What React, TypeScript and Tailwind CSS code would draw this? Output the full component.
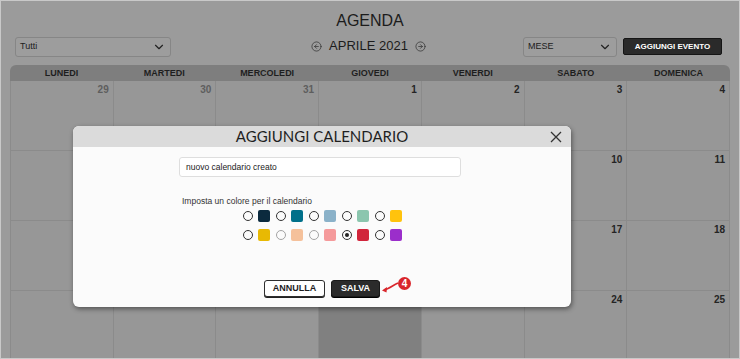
import { ChevronDown, CircleArrowLeft, CircleArrowRight } from "lucide-react"

const days = ["LUNEDI", "MARTEDI", "MERCOLEDI", "GIOVEDI", "VENERDI", "SABATO", "DOMENICA"]

type Day = { n: number; muted?: boolean; today?: boolean }

const weeks: Day[][] = [
  [{ n: 29, muted: true }, { n: 30, muted: true }, { n: 31, muted: true }, { n: 1 }, { n: 2 }, { n: 3 }, { n: 4 }],
  [{ n: 5 }, { n: 6 }, { n: 7 }, { n: 8 }, { n: 9 }, { n: 10 }, { n: 11 }],
  [{ n: 12 }, { n: 13 }, { n: 14 }, { n: 15 }, { n: 16 }, { n: 17 }, { n: 18 }],
  [{ n: 19 }, { n: 20 }, { n: 21 }, { n: 22, today: true }, { n: 23 }, { n: 24 }, { n: 25 }],
]

type Swatch = { color: string; light?: boolean; checked?: boolean }

const swatchRows: Swatch[][] = [
  [{ color: "#0b2a3e" }, { color: "#00708a" }, { color: "#8bb2c9" }, { color: "#8bc6ae" }, { color: "#ffc30d" }],
  [
    { color: "#e8b903" },
    { color: "#f5c19b", light: true },
    { color: "#f59a9b", light: true },
    { color: "#d1253b", checked: true },
    { color: "#9b2ecb" },
  ],
]

function Select({ label, width }: { label: string; width: string }) {
  return (
    <div
      className={`${width} h-[20px] flex items-center justify-between pl-[4px] pr-[4px] border border-[#868686] rounded-[3px] bg-[#9d9d9d] text-[9px] text-[#1c1c1c]`}
    >
      <span>{label}</span>
      <ChevronDown size={14} strokeWidth={2} className="text-[#222]" />
    </div>
  )
}

export default function App() {
  return (
    <div className="relative w-[740px] h-[359px] overflow-hidden border border-[#c9c9c9] bg-[#9b9b9b] font-['Liberation_Sans',Arial,sans-serif] text-[#1c1c1c]">
      <h1 className="pt-[11px] text-center text-[16px] leading-[18px]">AGENDA</h1>

      {/* toolbar */}
      <div className="mt-[7px] grid grid-cols-[1fr_auto_1fr] items-start pl-[14px] pr-[17px]">
        <div className="flex justify-start">
          <Select label="Tutti" width="w-[156px]" />
        </div>
        <div className="flex items-center gap-[7px] h-[16px] mt-[1px] text-[13px] leading-[16px]">
          <CircleArrowLeft size={11} strokeWidth={1.6} className="text-[#333]" />
          <span>APRILE 2021</span>
          <CircleArrowRight size={11} strokeWidth={1.6} className="text-[#333]" />
        </div>
        <div className="flex justify-end items-start gap-[6px]">
          <Select label="MESE" width="w-[94px]" />
          <button className="w-[99px] h-[17px] mt-[1px] rounded-[2px] border border-[#151515] bg-[#2a2a2a] text-[8px] font-bold text-white leading-none">
            AGGIUNGI EVENTO
          </button>
        </div>
      </div>

      {/* calendar */}
      <div className="mt-[8px] ml-[9px] w-[720px]">
        <div className="grid grid-cols-7 h-[16px] rounded-t-[6px] bg-[#7e7e7e] text-[9px] font-bold leading-[16px] text-center text-[#1e1e1e]">
          {days.map((d) => (
            <div key={d}>{d}</div>
          ))}
        </div>
        <div className="grid grid-cols-7 border-l border-[#8b8b8b]">
          {weeks.flat().map((d, i) => (
            <div
              key={i}
              className={`h-[70px] border-r border-b border-[#8b8b8b] pr-[4px] pt-[3px] text-right text-[10px] leading-[12px] font-bold ${
                d.today ? "bg-[#808080]" : "bg-[#979797]"
              } ${d.muted ? "text-[#5e5e5e]" : "text-[#242424]"}`}
            >
              {d.n}
            </div>
          ))}
        </div>
      </div>

      {/* modal */}
      <div className="absolute left-[72px] top-[125px] w-[498px] h-[181px] flex flex-col overflow-hidden rounded-[6px] bg-[#fbfbfb] shadow-[1px_2px_5px_rgba(0,0,0,0.45)]">
        <div className="relative h-[21px] flex items-center justify-center bg-[#dbdbdb]">
          <span className="font-['Lato',sans-serif] text-[15px] leading-none text-[#1f1f1f]">AGGIUNGI CALENDARIO</span>
          <svg className="absolute right-[9px] top-[5px]" width="12" height="12" viewBox="0 0 12 12">
            <path d="M1 1 L11 11 M11 1 L1 11" stroke="#333" strokeWidth="1.3" fill="none" />
          </svg>
        </div>

        <div className="mt-[10px] ml-[106px] w-[282px] h-[20px] flex items-center pl-[6px] border border-[#dedede] rounded-[3px] bg-white text-[8.5px] text-[#222]">
          nuovo calendario creato
        </div>

        <p className="mt-[19px] ml-[109px] text-[8.5px] leading-[11px] text-[#333]">Imposta un colore per il calendario</p>

        <div className="mt-[3px] flex flex-col items-center gap-[7px]">
          {swatchRows.map((row, r) => (
            <div key={r} className="flex items-center gap-[6px]">
              {row.map((s, i) => (
                <div key={i} className="flex items-center gap-[5px]">
                  <span
                    className={`w-[10px] h-[10px] flex items-center justify-center rounded-full border-[1.5px] ${
                      s.light ? "border-[#a3a3a3]" : "border-[#333]"
                    }`}
                  >
                    {s.checked && <span className="w-[4px] h-[4px] rounded-full bg-[#222]" />}
                  </span>
                  <span className="w-[12px] h-[12px] rounded-[2px]" style={{ backgroundColor: s.color }} />
                </div>
              ))}
            </div>
          ))}
        </div>

        <div className="mt-auto mb-[10px] flex justify-center gap-[6px]">
          <button className="w-[61px] h-[17px] rounded-[3px] border border-[#2e2e2e] bg-white text-[9px] font-bold leading-none text-[#1d1d1d] shadow-[0_1px_0_#222]">
            ANNULLA
          </button>
          <button className="w-[49px] h-[17px] rounded-[3px] border border-[#1a1a1a] bg-[#2b2b2b] text-[9px] font-bold leading-none text-white shadow-[0_1px_0_#000]">
            SALVA
          </button>
        </div>
      </div>

      {/* step marker */}
      <div className="absolute left-[380px] top-[276px] flex items-start">
        <svg width="18" height="16" viewBox="0 0 18 16" className="mt-[3px]">
          <path d="M17 3 C 12 5, 8 9, 3 10" stroke="#d9262c" strokeWidth="1.6" fill="none" />
          <path d="M1 10.5 L6 7 L5.5 12.5 Z" fill="#d9262c" />
        </svg>
        <span className="w-[13px] h-[13px] -ml-[1px] flex items-center justify-center rounded-full bg-[#d9262c] text-[10px] font-bold leading-none text-white">
          4
        </span>
      </div>
    </div>
  )
}
